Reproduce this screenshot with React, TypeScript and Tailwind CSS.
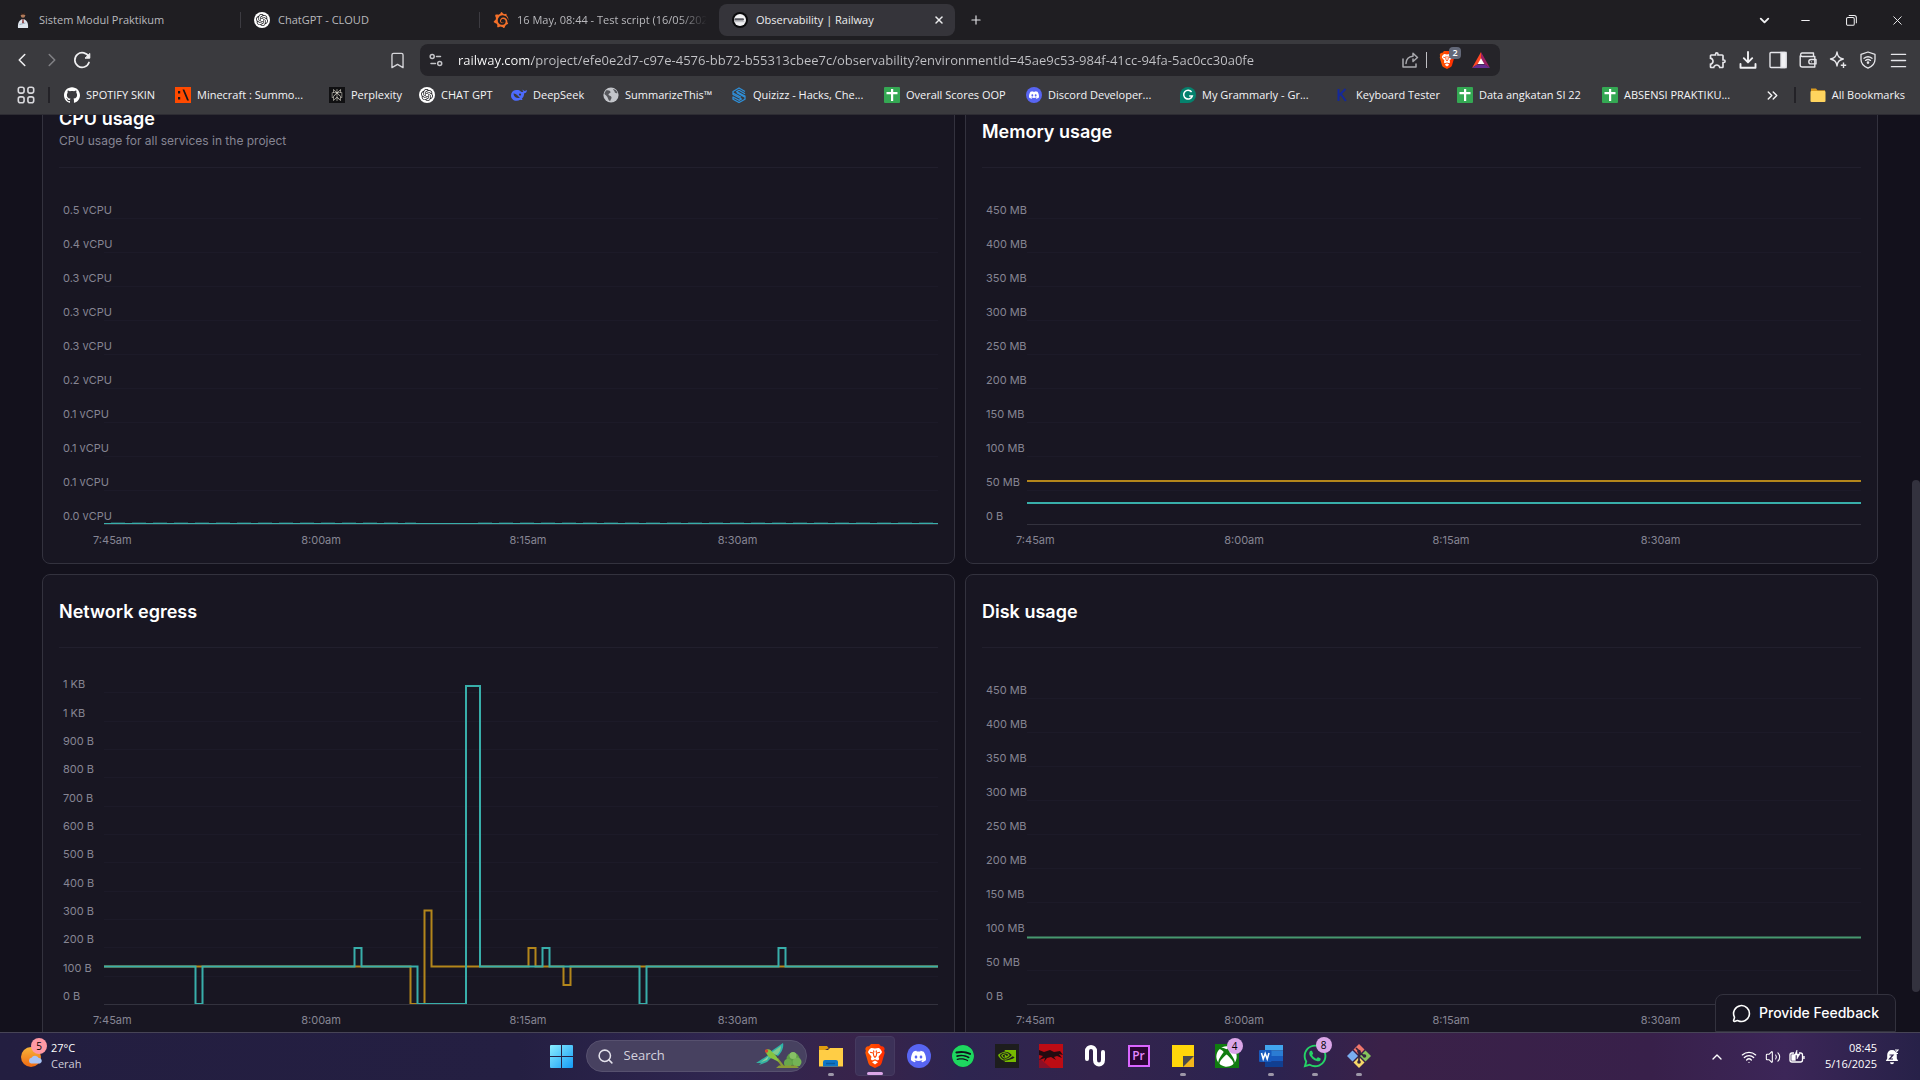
import React from "react";
import {
  ChevronDown, ChevronLeft, ChevronRight, ChevronUp, Minus, X, Plus, Bookmark,
  Menu, ChevronsRight, MessageCircle, Search, Wifi, Volume2,
} from "lucide-react";
import { SiDiscord, SiGithub, SiGrafana, SiNvidia, SiOpenai, SiPerplexity, SiSpotify } from "react-icons/si";
import { FaWhatsapp, FaXbox } from "react-icons/fa";
import { MdOutlineExtension } from "react-icons/md";

/* ---------- small drawings ---------- */

const PersonIcon = () => (
  <svg viewBox="0 0 12 16" className="h-4 w-3">
    <circle cx="6" cy="3.500" r="2.200" fill="#b07a5a" />
    <path d="M3.800 3a2.200 2.200 0 0 1 4.400 0c-1-.8-3.400-.8-4.400 0z" fill="#2a1c18" />
    <path d="M1 16c-.6-5 1.500-8.500 5-9 3.500.5 5.600 4 5 9z" fill="#dfe6ee" />
    <path d="M5.400 7h1.200l.3 4-.9 1-.9-1z" fill="#8a3a3a" />
    <path d="M2.500 12.500 8.500 11" stroke="#9fb0c0" />
  </svg>
);
const OpenAiIcon = () => (
  <span className="flex size-4 items-center justify-center rounded-full bg-white text-[#202024]"><SiOpenai size={12} /></span>
);
const RailwayIcon = () => (
  <svg viewBox="0 0 16 16" className="size-4">
    <circle cx="8" cy="8" r="8" fill="#0b0b0d" />
    <circle cx="8" cy="8" r="6" fill="#f2f2f4" />
    <path d="M3 6.300h7.500c1 0 1.500.5 1.500 1.100s-.6 1.200-1.500 1.200H2.300c-.1-.9.200-1.700.7-2.300z" fill="#55555c" />
    <path d="M2.600 9.700h9.800" stroke="#b8b8be" />
  </svg>
);
/* Lion face on an orange shield, used by the address bar and the taskbar */
const BraveIcon = ({ className }: { className: string }) => (
  <svg viewBox="0 0 20 24" className={className}>
    <defs><linearGradient id="brave" x1="0" y1="0" x2="1" y2="0"><stop stopColor="#ff5a00" /><stop offset="1" stopColor="#ff2a00" /></linearGradient></defs>
    <path d="M6 0h8l2 2.300c1.300-.3 2.300.2 3.100 1.200L19.700 5l-.6 1.800.6 1.900-3 10.400c-.3 1-.8 1.700-1.600 2.300L10 24l-5.100-2.600c-.8-.6-1.300-1.300-1.600-2.300L.3 8.700l.6-1.900L.3 5l.6-1.500C1.700 2.500 2.700 2 4 2.300z" fill="url(#brave)" />
    <path d="M10 4.600c1.200 0 2.600-.7 3.700-.5 1.300.5 2.300 1.900 3 3.200.4.800.2 1.300-.3 2l-2.600 2.900c-.4.5-.3.900 0 1.500.5.900.4 1.700-.3 2.300-1 .8-1.600.1-2.400-.3l-1.100-.5-1.100.5c-.8.4-1.400 1.100-2.400.3-.7-.6-.8-1.400-.3-2.300.3-.6.4-1 0-1.500L3.600 9.300c-.5-.7-.7-1.200-.3-2 .7-1.300 1.700-2.700 3-3.200 1.100-.2 2.500.5 3.700.5z" fill="#fff" />
    <path d="M10 16.400l2.600 1.500c.3.200.3.400 0 .7L10 20.500l-2.600-1.900c-.3-.3-.3-.5 0-.7z" fill="#fff" />
    <path d="M5 8.300 8.300 9l.5 2.800L10 13.400l1.200-1.600.5-2.800L15 8.300M8.500 6.500 9 8.500M11.500 6.500 11 8.500" stroke="#ff4300" strokeWidth="1.100" fill="none" strokeLinejoin="round" />
  </svg>
);
const ReloadIcon = () => (
  <svg viewBox="0 0 18 18" className="size-[18px]" fill="none" stroke="#f0f0f2" strokeWidth="1.700" strokeLinecap="round">
    <path d="M16 11.500A7.300 7.300 0 1 1 15.800 6" />
    <path d="M16.800 2.800v4.400h-4.400z" fill="#f0f0f2" strokeWidth="1" />
  </svg>
);
const TuneIcon = () => (
  <svg viewBox="0 0 14 14" className="size-3.5" fill="none" stroke="#c4c4c8" strokeWidth="1.500" strokeLinecap="round">
    <circle cx="3.200" cy="3.500" r="2" /><path d="M7.500 3.500h4M2 10.500h4.500" /><circle cx="10.700" cy="10.500" r="2" />
  </svg>
);
const ShareIcon = () => (
  <svg viewBox="0 0 18 18" className="size-[18px]" fill="none" stroke="#a9a9ae" strokeWidth="1.500" strokeLinecap="round" strokeLinejoin="round">
    <path d="M2 8v8h13v-3" /><path d="M5 12.500C5.300 8 8 5.500 12 5.300V2.300L16.500 6.500 12 10.500V8" />
  </svg>
);
const BatIcon = () => (
  <svg viewBox="0 0 18 16" className="h-4 w-[18px]">
    <path d="M9 0 0 16l9-6z" fill="#ff4724" /><path d="M9 0l9 16-9-6z" fill="#9e1f63" />
    <path d="M0 16h18l-5-3.500H5z" fill="#662d91" /><path d="M9 6.200 12.300 12H5.700z" fill="#fff" />
  </svg>
);
const DownloadIcon = () => (
  <svg viewBox="0 0 18 18" className="size-[18px]" fill="none" stroke="#f2f2f4" strokeWidth="1.900" strokeLinecap="round" strokeLinejoin="round">
    <path d="M9 1v10M4.800 7.200 9 11.400l4.200-4.200M1.500 13v3.700h15V13" />
  </svg>
);
const SidebarIcon = () => (
  <svg viewBox="0 0 18 18" className="size-[18px]" fill="none" stroke="#e6e6ea" strokeWidth="1.400">
    <rect x="1" y="1.500" width="16" height="15" rx="1" /><path d="M12 1.500h5v15h-5z" fill="#f2f2f4" />
  </svg>
);
const WalletIcon = () => (
  <svg viewBox="0 0 18 18" className="size-[18px]" fill="none" stroke="#e6e6ea" strokeWidth="1.400" strokeLinejoin="round">
    <path d="M1.200 4.500V14a2 2 0 0 0 2 2h12.600V5.500H3A1.800 1.800 0 0 1 3 2h11.500v3.500" /><path d="M17 8.500h-5a2.200 2.200 0 0 0 0 4.400h5z" /><path d="M12.200 10.700h.6" />
  </svg>
);
const LeoIcon = () => (
  <svg viewBox="0 0 18 18" className="size-[18px]" fill="none" stroke="#e6e6ea" strokeWidth="1.400" strokeLinejoin="round">
    <path d="M8 1c.6 4.400 2 5.900 6.300 7-4.300 1.100-5.700 2.600-6.300 7-.7-4.400-2.200-5.900-6.500-7C5.800 6.900 7.300 5.400 8 1z" /><path d="M14.500 11.500v5.500M11.800 14.200h5.400" />
  </svg>
);
const VpnIcon = () => (
  <svg viewBox="0 0 18 18" className="size-[18px]" fill="none" stroke="#e6e6ea" strokeWidth="1.300" strokeLinecap="round" strokeLinejoin="round">
    <path d="M9 1l7 2.300v5.200c0 4-2.500 6.800-7 8.700-4.500-1.900-7-4.700-7-8.700V3.300z" />
    <path d="M5 7.300c2.500-1.900 5.500-1.900 8 0M6.500 9.400c1.600-1.200 3.400-1.200 5 0" /><circle cx="9" cy="11.600" r=".7" fill="#e6e6ea" />
  </svg>
);
const AppsIcon = () => (
  <svg viewBox="0 0 18 18" className="size-[18px]" fill="none" stroke="#d8d8dc" strokeWidth="1.600">
    <rect x="1.300" y="1.300" width="5.800" height="5.800" rx="2" /><rect x="10.900" y="1.300" width="5.800" height="5.800" rx="2" />
    <rect x="1.300" y="10.900" width="5.800" height="5.800" rx="2" /><rect x="10.900" y="10.900" width="5.800" height="5.800" rx="2" />
  </svg>
);
const MakerIcon = () => (
  <svg viewBox="0 0 16 16" className="size-4"><path d="M0 0h16v16H0z" fill="#ff4a00" /><path d="M3 4h2.200v2.400H3zM3 10h2.200v2.400H3zM7.500 2.500h1.800l4.700 11h-1.900z" fill="#16161a" /></svg>
);
const WhaleIcon = () => (
  <svg viewBox="0 0 16 16" className="size-4" fill="#4d6bfe">
    <path d="M15.900 3.300c-.9-.4-1.100.5-1.900.6-1 .1-1.700-.6-2.300-1.400-.2.900.1 1.800.8 2.400-.8.400-1.900.2-2.700-.5C8.500 3 7 2.800 5 3 1.900 3.300 0 5.600 0 8.500c0 3.200 2.600 5.400 5.600 5.300 1.400 0 2.500-.4 3.600-1.100.8.300 1.600.3 2.400 0-.3-.3-.6-.6-.8-.9 1.800-1.500 2.300-3.500 2.400-5.500 1.500-.1 2.700-1.200 2.700-3z" />
    <path d="M2.500 6.500c2.500-.4 4.500 2.700 6.400 4.300-2.900 1-6.100-.6-6.400-4.300z" fill="#3a3a3e" /><circle cx="9" cy="7.600" r="1.100" fill="#3a3a3e" />
  </svg>
);
const GlobeIcon = () => (
  <svg viewBox="0 0 16 16" className="size-4">
    <circle cx="8" cy="8" r="7.600" fill="#c3c5ca" />
    <path d="M3 3.500c2.500-.6 4.600.2 4.500 1.800-.1 1.300-2 .9-2 2.200s2.600 1 3 2.700c.3 1.400-1 2-1.300 3.800-2-.5-2-3-3.200-4.600C3 8 1.200 7.600 1.500 6.200zM10 2c.4 1.700 1.500 1.500 1.600 2.700.1 1.400 2 1.700 2.900 1.200-.6-2-2.300-3.500-4.500-3.900z" fill="#55565b" />
  </svg>
);
const QuizIcon = () => (
  <svg viewBox="0 0 14 16" className="h-4 w-4" fill="none" stroke="#2f8fd8" strokeWidth="1.300" strokeLinejoin="round">
    <path d="M13 4.500 7 1 1 4.500v3L9.500 12 7 13.300 1 10v2.200L7 15.500l6-3.300V9L4.500 4.700 7 3.300 13 6.700M1 6l8 4.300M5 5.800l8 4.500" />
  </svg>
);
const SheetIcon = () => (
  <svg viewBox="0 0 16 16" className="size-4"><rect width="16" height="16" rx="1" fill="#34a853" /><path d="M2.500 5h11v2.200h-4.300V14H7V7.200H2.500zM7 2h2.200v4H7z" fill="#fff" /></svg>
);
const DiscordIcon = () => (
  <span className="flex size-4 items-center justify-center rounded-full bg-[#5865f2] text-white"><SiDiscord size={10} /></span>
);
const GrammarlyIcon = () => (
  <svg viewBox="0 0 16 16" className="size-4">
    <path d="M0 16V8a8 8 0 1 1 8 8z" fill="#05816d" />
    <path d="M11.600 5A4.400 4.400 0 1 0 12.300 9H9.200" stroke="#fff" strokeWidth="1.500" fill="none" />
  </svg>
);
const KIcon = () => (
  <svg viewBox="0 0 16 16" className="size-4" stroke="#14289a" strokeWidth="2" fill="none"><path d="M4.500 2v12M11.500 2 5 8.500M6.800 7l5 7" /></svg>
);
const FolderIcon = () => (
  <svg viewBox="0 0 16 16" className="size-4"><path d="M1 1.500h5l1.500 1.800H15v9H1z" fill="#d99a1f" /><rect x=".5" y="4" width="15" height="11" rx="1" fill="#ffd45e" /></svg>
);

/* ---------- browser frame ---------- */

const tabs = [
  { title: "Sistem Modul Praktikum", icon: <PersonIcon /> },
  { title: "ChatGPT - CLOUD", icon: <OpenAiIcon /> },
  { title: "16 May, 08:44 - Test script (16/05/2025", icon: <SiGrafana size={16} color="#f3702a" /> },
];

const TabStrip = () => (
  <header className="flex h-10 items-center bg-[#1f1e22] pl-0.5 text-[11px] text-[#b9b9bd]">
    {tabs.map((t, i) => (
      <button key={t.title} className={"flex h-4 w-[239px] items-center pl-[13px] text-left " + (i < 2 ? "border-r border-[#3c3b41]" : "")}>
        <span className="flex w-4 justify-center">{t.icon}</span>
        <span className={"ml-2 w-[190px] overflow-hidden whitespace-nowrap " + (i === 2 ? "[mask-image:linear-gradient(90deg,#000_85%,transparent)]" : "")}>{t.title}</span>
      </button>
    ))}
    <div className="flex h-8 w-[236px] items-center rounded-lg bg-[#35343a] pl-[13px] pr-2.5 text-[#ececee]">
      <button className="flex flex-1 items-center gap-2 text-left"><RailwayIcon />Observability | Railway</button>
      <button aria-label="Close tab"><X size={12} strokeWidth={3} /></button>
    </div>
    <button aria-label="New tab" className="ml-3.5 text-[#e0e0e3]"><Plus size={14} strokeWidth={2} /></button>
    <div className="ml-auto flex items-center text-[#f0f0f2]">
      <button aria-label="Search tabs" className="mr-1 flex w-7 justify-center"><ChevronDown size={15} strokeWidth={3} /></button>
      <button aria-label="Minimize" className="flex w-[46px] justify-center"><Minus size={13} strokeWidth={2} /></button>
      <button aria-label="Restore" className="flex w-[46px] justify-center">
        <svg viewBox="0 0 12 12" className="size-[11px]" fill="none" stroke="currentColor" strokeWidth="1.100"><rect x=".6" y="2.800" width="8.400" height="8.400" rx="1.500" /><path d="M3 .6h6a2.300 2.300 0 0 1 2.300 2.300V9" /></svg>
      </button>
      <button aria-label="Close window" className="flex w-[46px] justify-center"><X size={15} strokeWidth={1.5} /></button>
    </div>
  </header>
);

const toolIcons = [
  { name: "Extensions", icon: <MdOutlineExtension size={20} /> },
  { name: "Downloads", icon: <DownloadIcon /> },
  { name: "Sidebar", icon: <SidebarIcon /> },
  { name: "Wallet", icon: <WalletIcon /> },
  { name: "Leo", icon: <LeoIcon /> },
  { name: "VPN", icon: <VpnIcon /> },
  { name: "Menu", icon: <Menu size={21} strokeWidth={1.7} /> },
];

const Toolbar = () => (
  <div className="grid h-10 grid-cols-[420px_minmax(0,1fr)_420px] items-center bg-[#3a3a3e]">
    <nav className="flex items-center pl-[7px] pr-[13px]">
      <button aria-label="Back" className="flex w-[30px] justify-center text-[#f0f0f2]"><ChevronLeft size={22} strokeWidth={1.7} /></button>
      <button aria-label="Forward" className="flex w-[30px] justify-center text-[#808085]"><ChevronRight size={22} strokeWidth={1.7} /></button>
      <button aria-label="Reload" className="flex w-[30px] justify-center"><ReloadIcon /></button>
      <button aria-label="Bookmark this page" className="ml-auto text-[#d6d6da]"><Bookmark size={19} strokeWidth={1.7} /></button>
    </nav>
    <div className="flex h-8 items-center rounded-lg bg-[#252429] pl-[9px] pr-2.5">
      <TuneIcon />
      <input
        aria-label="Address"
        readOnly
        value="railway.com/project/efe0e2d7-c97e-4576-bb72-b55313cbee7c/observability?environmentId=45ae9c53-984f-41cc-94fa-5ac0cc30a0fe"
        className="ml-[15px] min-w-0 flex-1 bg-[linear-gradient(90deg,#ffffff_74px,#c4c4c8_74px)] bg-clip-text pt-px text-[13px] text-transparent outline-none"
      />
      <button aria-label="Share"><ShareIcon /></button>
      <span className="ml-[7px] mr-3 h-4 w-px bg-[#c0c0c4]" />
      <button aria-label="Shields" className="relative mr-[17px] flex">
        <BraveIcon className="h-[18px] w-4" />
        <span className="absolute -top-1 left-2.5 flex h-3 w-3 items-center justify-center rounded bg-[#636878] text-[9px] font-semibold text-white">2</span>
      </button>
      <button aria-label="Rewards"><BatIcon /></button>
    </div>
    <div className="flex justify-end pr-[7px] text-[#e6e6ea]">
      {toolIcons.map((t) => (
        <button key={t.name} aria-label={t.name} className="flex w-[30px] items-center justify-center">{t.icon}</button>
      ))}
    </div>
  </div>
);

const bookmarks = [
  { name: "SPOTIFY SKIN", icon: <SiGithub size={16} color="#fff" />, w: "w-[111px]" },
  { name: "Minecraft : Summo...", icon: <MakerIcon />, w: "w-[154px]" },
  { name: "Perplexity", icon: <span className="flex size-4 items-center justify-center bg-[#101012] text-[#d8d4c8]"><SiPerplexity size={12} /></span>, w: "w-[90px]" },
  { name: "CHAT GPT", icon: <OpenAiIcon />, w: "w-[92px]" },
  { name: "DeepSeek", icon: <WhaleIcon />, w: "w-[92px]" },
  { name: "SummarizeThis™", icon: <GlobeIcon />, w: "w-[128px]" },
  { name: "Quizizz - Hacks, Che...", icon: <QuizIcon />, w: "w-[153px]" },
  { name: "Overall Scores OOP", icon: <SheetIcon />, w: "w-[142px]" },
  { name: "Discord Developer...", icon: <DiscordIcon />, w: "w-[154px]" },
  { name: "My Grammarly - Gr...", icon: <GrammarlyIcon />, w: "w-[154px]" },
  { name: "Keyboard Tester", icon: <KIcon />, w: "w-[123px]" },
  { name: "Data angkatan SI 22", icon: <SheetIcon />, w: "w-[145px]" },
  { name: "ABSENSI PRAKTIKU...", icon: <SheetIcon />, w: "w-[142px]" },
];

const BookmarksBar = () => (
  <nav className="flex h-[35px] items-center overflow-hidden whitespace-nowrap border-b border-[#2d2c33] bg-[#3a3a3e] pb-1 pl-[17px] pr-[15px] text-[11px] text-[#f4f4f6]">
    <button aria-label="Apps"><AppsIcon /></button>
    <span className="ml-[13px] mr-[14px] h-4 w-0.5 shrink-0 bg-[#232227]" />
    {bookmarks.map((b) => (
      <a key={b.name} href="#" className={"flex shrink-0 items-center gap-1.5 " + b.w}>{b.icon}{b.name}</a>
    ))}
    <button aria-label="More bookmarks" className="ml-auto"><ChevronsRight size={17} strokeWidth={2} /></button>
    <span className="ml-[13px] mr-[14px] h-4 w-0.5 bg-[#232227]" />
    <a href="#" className="flex items-center gap-1.5"><FolderIcon />All Bookmarks</a>
  </nav>
);

/* ---------- charts ---------- */

const teal = "#38aeaa";
const gold = "#b3861b";
const times = ["7:45am", "8:00am", "8:15am", "8:30am"];
const memLabels = ["450 MB", "400 MB", "350 MB", "300 MB", "250 MB", "200 MB", "150 MB", "100 MB", "50 MB", "0 B"];

function ChartCard({ title, subtitle, labels, children }: { title: string; subtitle?: string; labels: string[]; children: React.ReactNode }) {
  return (
    <section className="rounded-lg border border-[#33323e] bg-[#181622] px-4 pb-[15px] font-[Inter,sans-serif]">
      <div className={"flex h-[73px] flex-col justify-center border-b border-[#211f2d] " + (subtitle ? "pb-1" : "pt-0.5")}>
        <h2 className="text-lg font-semibold leading-6 text-white">{title}</h2>
        {subtitle && <p className="text-[12px] leading-5 text-[#868593]">{subtitle}</p>}
      </div>
      <div className="mt-4 flex text-[11px] leading-4 text-[#868593]">
        <div className="flex h-[340px] w-[45px] flex-col pl-1">
          {labels.map((l, i) => (
            <span key={i} className="flex flex-1 items-end whitespace-nowrap">{l}</span>
          ))}
        </div>
        <div className="min-w-0 flex-1 border-b border-[#33323e]">
          <svg viewBox="0 0 834 340" preserveAspectRatio="none" className="block h-[340px] w-full" fill="none" strokeWidth="2">
            {labels.slice(1).map((_, i) => (
              <path key={i} d={`M0 ${Math.round(((i + 1) * 340) / labels.length) + 0.5}H834`} stroke="#1c1a28" strokeWidth="1" />
            ))}
            {children}
          </svg>
        </div>
      </div>
      <div className="mt-[7px] grid grid-cols-4 pl-[34px] pr-3 text-[11px] leading-4 text-[#868593]">
        {times.map((t) => <span key={t}>{t}</span>)}
      </div>
    </section>
  );
}

const Dashboard = () => (
  <main className="relative min-h-0 flex-1 overflow-hidden bg-[#13111c]">
    <div className="-mt-[21px] grid grid-cols-2 gap-2.5 px-[42px]">
      <ChartCard title="CPU usage" subtitle="CPU usage for all services in the project" labels={["0.5 vCPU", "0.4 vCPU", "0.3 vCPU", "0.3 vCPU", "0.3 vCPU", "0.2 vCPU", "0.1 vCPU", "0.1 vCPU", "0.1 vCPU", "0.0 vCPU"]}>
        <path d="M7 338.500H312M374 338.500H834" stroke="#22474e" strokeWidth="1" strokeDasharray="14 7" />
        <path d="M0 339.500H834" stroke={teal} strokeWidth="1" />
      </ChartCard>
      <ChartCard title="Memory usage" labels={memLabels}>
        <path d="M0 297H834" stroke={gold} />
        <path d="M0 319H834" stroke={teal} />
      </ChartCard>
      <ChartCard title="Network egress" labels={["1 KB", "1 KB", "900 B", "800 B", "700 B", "600 B", "500 B", "400 B", "300 B", "200 B", "100 B", "0 B"]}>
        <path d="M0 302.500H306.500V340H320.500V246.500H327.500V302.500H424.500V284H431.500V302.500H459.500V321H466.500V302.500H834" stroke={gold} />
        <path d="M0 302.500H91.500V340H98.500V302.500H250.500V284H257.500V302.500H313.500V340H362V22H376V302.500H438.500V284H445.500V302.500H535.500V340H542.500V302.500H674.500V284H681.500V302.500H834" stroke={teal} />
      </ChartCard>
      <ChartCard title="Disk usage" labels={memLabels}>
        <path d="M0 273.500H834" stroke="#46986f" />
      </ChartCard>
    </div>
    <div className="absolute right-0 top-[365px] h-[512px] w-2 rounded-full bg-[#33323e]" />
    <button className="absolute bottom-0 right-6 flex h-[38px] items-center gap-2 rounded-t-lg border border-[#33323e] bg-[#181622] px-4 font-[Inter,sans-serif] text-sm font-medium text-white">
      <MessageCircle size={19} strokeWidth={2} />
      Provide Feedback
    </button>
  </main>
);

/* ---------- taskbar ---------- */

const badge = "absolute -right-1 -top-1.5 flex size-4 items-center justify-center rounded-full text-[10px] text-black bg-[#dba6e8]";

const WeatherIcon = () => (
  <svg viewBox="0 0 22 22" className="size-[22px]">
    <defs><linearGradient id="sun" x1="0" y1="0" x2="0" y2="1"><stop stopColor="#f7b53a" /><stop offset="1" stopColor="#f06a12" /></linearGradient></defs>
    <circle cx="10" cy="11" r="10" fill="url(#sun)" />
    <path d="M10 17.500a3 3 0 0 1 .5-5.800 4 4 0 0 1 7.200.4 2.800 2.800 0 0 1 1.300 5.400z" fill="#a9c4f5" />
  </svg>
);
const BirdArt = () => (
  <svg viewBox="0 0 46 26" className="h-[26px] w-[46px]">
    <circle cx="37" cy="16" r="6.500" fill="#5d9e45" /><circle cx="41" cy="19" r="4.500" fill="#74b356" /><circle cx="32" cy="20" r="4" fill="#6aa84c" /><circle cx="37" cy="12.500" r="3.500" fill="#86c065" />
    <path d="M20 25h23l-3-2.500H23zM20 16l6 8h3l-7-9z" fill="#8a9a35" />
    <path d="M14 9 27 0c1 4-1 9-5 13z" fill="#2fb4a8" /><path d="M15 10 25 3c0 3-1 6-4 9z" fill="#7fc98f" />
    <path d="M14 11 0 20l5 0-2 2 8-3 5-5z" fill="#35b2a2" /><path d="M13 13 5 19l6-2z" fill="#8fd49a" />
    <path d="M9 8c2-3 6-2 7 1 3 2 6 6 7 10l-6-3c-4-1-6-4-8-8z" fill="#86c340" /><circle cx="10.500" cy="8" r="1.700" fill="#d8452e" />
  </svg>
);

const apps: { name: string; icon: React.ReactNode; run?: boolean; active?: boolean; count?: number }[] = [
  { name: "File Explorer", run: true, icon: (
    <svg viewBox="0 0 24 22" className="h-[22px] w-6"><path d="M0 1h8l2 2.500h-1L0 8z" fill="#e09b0f" /><path d="M0 5h9l2-2h13v18.500H0z" fill="#ffcd45" /><path d="M4 21.500V17a2 2 0 0 1 2-2h11a2 2 0 0 1 2 2v4.500z" fill="#1075c6" /><path d="M7 18.500h9" stroke="#0b5a9c" strokeWidth="1.500" /></svg>) },
  { name: "Brave", active: true, icon: <BraveIcon className="h-6 w-5" /> },
  { name: "Discord", icon: <span className="flex size-6 items-center justify-center rounded-full bg-[#5865f2] text-white"><SiDiscord size={15} /></span> },
  { name: "Spotify", icon: <span className="flex size-[22px] rounded-full bg-[#10131a] text-[#1ed760]"><SiSpotify size={22} /></span> },
  { name: "NVIDIA", icon: <span className="flex size-6 items-center justify-center bg-[#1d1d1d] text-[#76b900]"><SiNvidia size={18} /></span> },
  { name: "Dragon Center", icon: (
    <svg viewBox="0 0 24 24" className="size-6"><path d="M0 0h24v24H0z" fill="#bd0c14" /><path d="M0 14 12 24H0z" fill="#8a1028" /><path d="M0 6l5 2 6-2 4 2 6-1 3 4-4-1 3 4-5-2-3 1 2 3-5-3-4 1-3 4 1-4-6 2 4-4-4-1z" fill="#240a10" /></svg>) },
  { name: "Nahimic", icon: (
    <svg viewBox="0 0 22 24" className="h-6 w-[22px]" fill="none" stroke="#fff" strokeWidth="4" strokeLinecap="round"><path d="M3 15V7c0-5.500 8-5.500 8 0v9c0 6 8 6 8 0V8" /></svg>) },
  { name: "Premiere Pro", icon: <span className="flex size-[22px] items-center justify-center border-2 border-[#d965ff] bg-[#2a0634] pb-px text-[12px] font-semibold text-[#e388ff]">Pr</span> },
  { name: "Sticky Notes", run: true, icon: (
    <svg viewBox="0 0 22 22" className="size-[22px]"><path d="M0 0h22v22H0z" fill="#ffd60a" /><path d="M22 11v11H11z" fill="#f3b61c" /><path d="M11 22V11h11z" fill="#4a4a4c" /></svg>) },
  { name: "Xbox", count: 4, icon: <span className="flex size-6 items-center justify-center bg-[#107c10] text-white"><FaXbox size={21} /></span> },
  { name: "Word", run: true, icon: (
    <svg viewBox="0 0 24 22" className="h-[22px] w-6"><path d="M6 0h18v5.500H6z" fill="#41a5ee" /><path d="M6 5.500h18V11H6z" fill="#2b7cd3" /><path d="M6 11h18v5.500H6z" fill="#185abd" /><path d="M6 16.500h18V22H6z" fill="#103f91" /><rect y="5" width="12.500" height="12" rx="1" fill="#185abd" /><path d="M2.500 8l1.700 6 2-5.500 2 5.500L10 8" stroke="#fff" strokeWidth="1.500" fill="none" /></svg>) },
  { name: "WhatsApp", run: true, count: 8, icon: <FaWhatsapp size={26} color="#25d366" /> },
  { name: "Git Bash", run: true, icon: (
    <svg viewBox="0 0 24 24" className="size-6"><path d="M12 0l5.500 5.500L12 11 6.500 5.500z" fill="#f0776c" /><path d="M5.500 6.500 11 12l-5.500 5.500L0 12z" fill="#7aaef0" /><path d="M18.500 6.500 24 12l-5.500 5.500L13 12z" fill="#86c35c" /><path d="M12 13l5.500 5.500L12 24l-5.500-5.500z" fill="#f7d868" /><path d="M9 4l3 3v10M12 8l5 4" stroke="#33253f" strokeWidth="1.700" fill="none" /><circle cx="12" cy="7.500" r="1.800" fill="#33253f" /><circle cx="17.500" cy="12" r="1.800" fill="#33253f" /><circle cx="12" cy="18" r="1.800" fill="#33253f" /></svg>) },
];

const Taskbar = () => (
  <footer className="grid h-12 grid-cols-[1fr_auto_1fr] items-center border-t border-[#474456] bg-[linear-gradient(90deg,#231e40_0%,#241f42_27%,#302650_38%,#38234a_45%,#2d2550_50%,#33244c_57%,#2b2350_66%,#3a2148_72%,#38204a_86%,#3c2658_93%,#272148_100%)]">
    <button className="flex items-center gap-2 pl-[21px] text-left text-[11px] leading-4 text-white">
      <span className="relative"><WeatherIcon /><span className="absolute -top-2 left-2.5 flex size-4 items-center justify-center rounded-full bg-[#ff99a4] text-[10px] text-black">5</span></span>
      <span className="flex flex-col pb-0.5"><span>27°C</span><span className="text-[#cfcdda]">Cerah</span></span>
    </button>
    <div className="flex items-center gap-1 pb-px">
      <button aria-label="Start" className="flex size-10 items-center justify-center">
        <svg viewBox="0 0 23 23" className="size-[23px]">
          <defs><linearGradient id="win" x1="0" y1="0" x2="1" y2="1"><stop stopColor="#8beeff" /><stop offset="1" stopColor="#149bf5" /></linearGradient></defs>
          <path d="M1 0h10v11H0V1a1 1 0 0 1 1-1zM12 0h10a1 1 0 0 1 1 1v10H12zM0 12h11v11H1a1 1 0 0 1-1-1zM12 12h11v10a1 1 0 0 1-1 1H12z" fill="url(#win)" />
        </svg>
      </button>
      <label className="flex h-8 w-[221px] items-center rounded-full border border-[#57516f] bg-[#474160] pl-2.5 pr-1">
        <Search size={17} strokeWidth={2.2} className="text-[#e4e2ec]" />
        <input aria-label="Search" placeholder="Search" className="ml-2.5 min-w-0 flex-1 bg-transparent text-[13px] text-white outline-none placeholder:text-[#d4d1de]" />
        <BirdArt />
      </label>
      {apps.map((a) => (
        <button key={a.name} aria-label={a.name} className={"relative flex size-10 items-center justify-center rounded " + (a.active ? "border border-[#463a60] bg-[#3c3158]" : "")}>
          <span className="relative">{a.icon}{a.count && <span className={badge}>{a.count}</span>}</span>
          {a.active && <span className="absolute bottom-0 h-[3px] w-4 rounded-full bg-[#dba6e8]" />}
          {a.run && <span className="absolute bottom-0 h-[3px] w-1.5 rounded-full bg-[#9d97a8]" />}
        </button>
      ))}
    </div>
    <div className="flex items-center justify-end pr-[21px] text-white">
      <button aria-label="Hidden icons" className="mr-4"><ChevronUp size={16} strokeWidth={2} /></button>
      <button aria-label="Quick settings" className="mr-5 flex items-center gap-2">
        <Wifi size={16} strokeWidth={2} /><Volume2 size={16} strokeWidth={1.6} />
        <svg viewBox="0 0 16 14" className="h-3.5 w-4" fill="none" stroke="#fff" strokeWidth="1.300"><path d="M5 3H3a2 2 0 0 0-2 2v5a2 2 0 0 0 2 2h8.500a2 2 0 0 0 2-2V5a2 2 0 0 0-2-2H10M15 6v3" /><path d="M3 5h3v5H3z" fill="#fff" /><path d="M8 0 5.500 5H8v4l3-5H8z" fill="#fff" strokeWidth=".5" /></svg>
      </button>
      <button className="pb-0.5 text-right text-[11px] leading-4">08:45<br />5/16/2025</button>
      <button aria-label="Notifications" className="ml-2">
        <svg viewBox="0 0 14 16" className="h-4 w-3.5"><path d="M7 1C4 1 2.200 3 2.200 6v3.500L.8 12h12.400l-1.400-2.500V6c0-3-1.800-5-4.800-5zM5 13.200h4a2 2 0 0 1-4 0z" fill="#fff" /><path d="M4.500 6h3.500l-3.500 4h3.500" stroke="#2f2450" strokeWidth="1.200" fill="none" /><path d="M10 1h3l-3 3.500h3" stroke="#fff" strokeWidth="1.100" fill="none" /></svg>
      </button>
    </div>
  </footer>
);

export default function App() {
  return (
    <div className="flex h-screen flex-col overflow-hidden bg-[#13111c] font-['Open_Sans',sans-serif]">
      <TabStrip />
      <Toolbar />
      <BookmarksBar />
      <Dashboard />
      <Taskbar />
    </div>
  );
}
